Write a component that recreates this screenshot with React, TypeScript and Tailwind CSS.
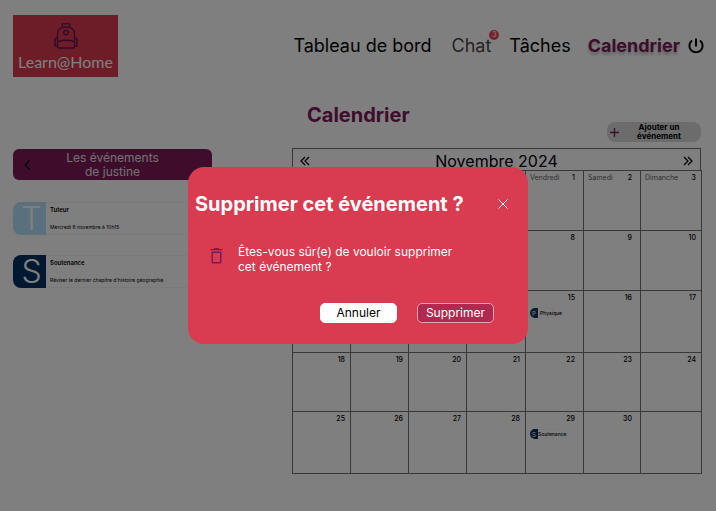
import React from "react";

type CalendarEvent = { letter: string; label: string; tile: string; pad: string };
type Day = { date?: number; event?: CalendarEvent };

const columns = [
  { name: "Lundi", width: "w-[58px]", inset: "pr-[1px]" },
  { name: "Mardi", width: "w-[58px]", inset: "pr-[1px]" },
  { name: "Mercredi", width: "w-[58px]", inset: "pr-[1px]" },
  { name: "Jeudi", width: "w-[59px]", inset: "pr-[1px]" },
  { name: "Vendredi", width: "w-[58px]", inset: "pr-1" },
  { name: "Samedi", width: "w-[57px]", inset: "pr-1" },
  { name: "Dimanche", width: "w-[61px]", inset: "pr-[1px]" },
];

const physique: CalendarEvent = { letter: "P", label: "Physique", tile: "bg-[#103a68]", pad: "pl-[2px]" };
const soutenance: CalendarEvent = { letter: "S", label: "Soutenance", tile: "bg-[#003060]", pad: "pl-0" };

const weeks: Day[][] = Array.from({ length: 5 }, (_, week) =>
  Array.from({ length: 7 }, (_, day) => {
    const date = week * 7 + day - 3;
    return {
      date: date >= 1 && date <= 30 ? date : undefined,
      event: date === 15 ? physique : date === 29 ? soutenance : undefined,
    };
  }),
);

const rowHeights = ["h-[60px]", "h-[60px]", "h-[62px]", "h-[59px]", "h-[62px]"];

function Backpack() {
  return (
    <svg viewBox="0 0 24 26" className="h-[26px] w-6" fill="none" stroke="#6a1250" strokeWidth="1.4" strokeLinejoin="round">
      <path d="M8.300 3.700V0.900h7.400v2.800" />
      <path d="M3.500 17.500V11c0-4.500 3.500-7 8.500-7s8.500 2.500 8.500 7v6.500" />
      <path d="M3.500 18.500c5-1.500 12-1.500 17 0v5c0 1-.5 1.500-1.500 1.500H5c-1 0-1.500-.5-1.500-1.500z" />
      <path d="M3.500 14.500C1.500 15 1 16 1 17v5c0 1 .5 1.500 2.500 1.500M20.500 14.500c2 .5 2.500 1.500 2.500 2.500v5c0 1-.5 1.500-2.500 1.500" />
      <circle cx="12" cy="9.500" r="2.300" />
    </svg>
  );
}

function Header() {
  return (
    <header className="flex items-start justify-between pt-[15px] pr-3 pl-[13px]">
      <a href="#" className="flex h-[62px] w-[105px] flex-col items-center bg-[#d93b50] pt-2">
        <Backpack />
        <span className="font-[Lato,sans-serif] text-[16px] leading-[26px] text-white">Learn@Home</span>
      </a>
      <nav className="flex h-[61px] items-center text-[18px] leading-6 text-black">
        <a href="#">Tableau de bord</a>
        <a href="#" className="relative ml-5 text-[#484848]">
          Chat
          <span className="absolute -top-1 -right-2 flex size-[10px] items-center justify-center rounded-full bg-[#f04458] text-[7px] leading-none text-white">
            3
          </span>
        </a>
        <a href="#" className="ml-[18px]">Tâches</a>
        <a href="#" className="ml-[17px] font-bold text-[#7a1a56] [text-shadow:0_3px_3px_rgb(0_0_0/0.25)]">
          Calendrier
        </a>
        <button type="button" aria-label="Déconnexion" className="ml-2">
          <svg viewBox="0 0 16 16" className="size-4" fill="none" stroke="black" strokeWidth="2">
            <path d="M8 0.500v8M4 2.500a6.600 6.600 0 1 0 8 0" />
          </svg>
        </button>
      </nav>
    </header>
  );
}

type EventCardProps = { letter: string; tile: string; title: string; detail: string; date?: string };

function EventCard({ letter, tile, title, detail, date }: EventCardProps) {
  return (
    <li className="flex h-[33px] rounded-lg bg-white ring-1 ring-[#f4f4f4] ring-inset">
      <div className={`flex w-[33px] items-center justify-center rounded-l-lg pl-1 text-[32px] leading-[33px] font-light text-white ${tile}`}>
        {letter}
      </div>
      <div className="flex flex-1 flex-col justify-between pt-1 pr-2 pb-1 pl-1">
        <div className="flex justify-between text-[6px] leading-2 font-semibold">
          <h3>{title}</h3>
          <span className="font-medium">{date}</span>
        </div>
        <p className="text-[5px] leading-2">{detail}</p>
      </div>
    </li>
  );
}

function EventPanel() {
  return (
    <aside className="w-[199px] pt-[72px]">
      <button
        type="button"
        className="relative flex h-[31px] w-full items-center justify-center rounded-md bg-[#7a1a56] text-[12px] leading-[14px] text-[#e8e0e4]"
      >
        <svg viewBox="0 0 6 10" className="absolute left-[11px] h-[10px] w-[6px]" fill="none" stroke="black" strokeWidth="1.200">
          <path d="M5.500 0.500L1 5l4.500 4.500" />
        </svg>
        <span>
          Les événements
          <br />
          de justine
        </span>
      </button>
      <ul className="mt-[22px] flex flex-col gap-5">
        <EventCard letter="T" tile="bg-[#b4e2fa]" title="Tuteur" detail="Mercredi 6 novembre à 10h15" />
        <EventCard
          letter="S"
          tile="bg-[#003060]"
          title="Soutenance"
          detail="Réviser le dernier chapitre d'histoire géographie"
          date="29/11"
        />
      </ul>
    </aside>
  );
}

function DoubleChevron({ flipped = false }: { flipped?: boolean }) {
  return (
    <svg viewBox="0 0 10 10" className={`size-[10px] ${flipped ? "rotate-180" : ""}`} fill="none" stroke="black" strokeWidth="1.200">
      <path d="M5 1L1 5l4 4M9 1L5 5l4 4" />
    </svg>
  );
}

function Calendar() {
  return (
    <section className="min-w-0 flex-1 pt-6">
      <div className="flex h-[41px] justify-between">
        <h1 className="ml-[15px] text-[20px] leading-7 font-bold text-[#7a1a56]">Calendrier</h1>
        <button
          type="button"
          className="flex h-5 w-[94px] items-center self-end rounded-lg bg-[#d9d9d9] pl-[3px] text-[8px] leading-[9px] font-bold"
        >
          <svg viewBox="0 0 9 9" className="size-[9px]" stroke="#7a1a56" strokeWidth="1.300">
            <path d="M4.500 0v9M0 4.500h9" />
          </svg>
          <span className="flex-1 pr-[6px] pl-1">
            Ajouter un
            <br />
            événement
          </span>
        </button>
      </div>
      <div className="mt-[6px] flex h-[22px] items-center justify-between border border-b-0 border-[#707070] px-[7px] pt-[2px]">
        <button type="button" aria-label="Mois précédent">
          <DoubleChevron />
        </button>
        <h2 className="text-[16px] leading-5">Novembre 2024</h2>
        <button type="button" aria-label="Mois suivant">
          <DoubleChevron flipped />
        </button>
      </div>
      <table className="w-full table-fixed border-collapse text-[7px] leading-[9px]">
        <colgroup>
          {columns.map((column) => (
            <col key={column.name} className={column.width} />
          ))}
        </colgroup>
        <tbody>
          {weeks.map((week, row) => (
            <tr key={row} className={rowHeights[row]}>
              {week.map((day, index) => (
                <td key={index} className="border border-[#707070] px-1 pt-[2px] align-top">
                  <div className={`flex justify-between ${columns[index].inset}`}>
                    <span className="text-[#606060]">{row === 0 ? columns[index].name : ""}</span>
                    <span className="font-medium">{day.date}</span>
                  </div>
                  {day.event && (
                    <div className="mt-[6px] flex h-[10px] w-[38px] items-center rounded-full text-[5px] font-medium ring-1 ring-[#f8f8f8] ring-inset">
                      <span
                        className={`flex h-full w-2 shrink-0 items-center justify-center rounded-l-full text-[6px] font-normal text-white ${day.event.tile}`}
                      >
                        {day.event.letter}
                      </span>
                      <span className={day.event.pad}>{day.event.label}</span>
                    </div>
                  )}
                </td>
              ))}
            </tr>
          ))}
        </tbody>
      </table>
    </section>
  );
}

function DeleteDialog() {
  return (
    <div className="fixed inset-0 flex items-center justify-center bg-black/50">
      <div
        role="dialog"
        aria-modal="true"
        aria-labelledby="delete-title"
        className="w-[340px] rounded-2xl bg-[#d93b50] pt-[25px] pr-5 pb-[21px] pl-[7px] text-white"
      >
        <div className="flex items-center justify-between">
          <h2 id="delete-title" className="text-[20px] leading-6 font-bold">
            Supprimer cet événement ?
          </h2>
          <button type="button" aria-label="Fermer">
            <svg viewBox="0 0 10 10" className="size-[10px]" stroke="white" strokeWidth="0.900">
              <path d="M0.500 0.500l9 9M9.500 0.500l-9 9" />
            </svg>
          </button>
        </div>
        <div className="mt-7 flex items-start pl-[15px]">
          <svg viewBox="0 0 13 16" className="mt-1 h-4 w-[13px]" fill="#7a1a56">
            <path d="M4 0h5v1h3.500v1.300H0.500V1H4z" />
            <path fillRule="evenodd" d="M1.500 3.500h10V14q0 1.500-1.500 1.500H3Q1.500 15.500 1.500 14zM3 5v9h7V5z" />
          </svg>
          <p className="ml-[15px] w-[220px] text-[12px] leading-[15px]">Êtes-vous sûr(e) de vouloir supprimer cet événement ?</p>
        </div>
        <div className="mt-[29px] flex justify-end gap-5 pr-[14px] text-[12px] leading-[18px]">
          <button type="button" className="w-[77px] rounded-[5px] border border-white bg-white text-black">
            Annuler
          </button>
          <button type="button" className="w-[77px] rounded-[5px] border border-[#eba0b0] bg-[#b02a50]">
            Supprimer
          </button>
        </div>
      </div>
    </div>
  );
}

export default function App() {
  return (
    <div className="min-h-screen bg-white font-[Inter,sans-serif] text-black">
      <Header />
      <main className="flex gap-20 pr-[15px] pl-[13px]">
        <EventPanel />
        <Calendar />
      </main>
      <DeleteDialog />
    </div>
  );
}
